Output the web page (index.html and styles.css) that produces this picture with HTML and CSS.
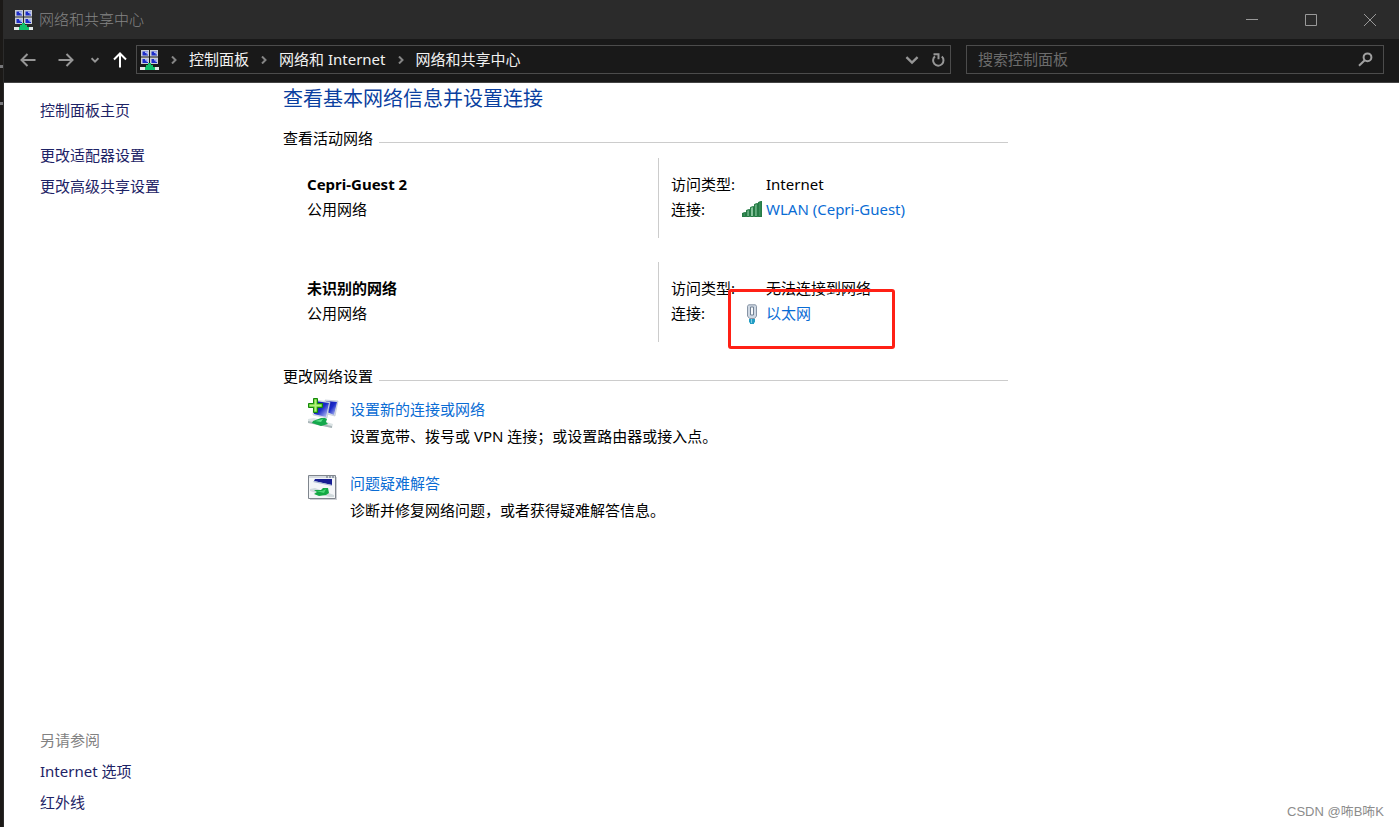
FILE: index.html
```html
<!DOCTYPE html>
<html lang="zh-CN">
<head>
<meta charset="utf-8">
<title>网络和共享中心</title>
<link rel="stylesheet" href="styles.css">
</head>
<body>
<svg class="defs" aria-hidden="true">
  <defs>
    <linearGradient id="screen" x1="0" y1="0" x2="1" y2="1">
      <stop offset="0" stop-color="#0a12a8"/><stop offset=".5" stop-color="#1c2cc8"/><stop offset="1" stop-color="#d4defc"/>
    </linearGradient>
    <linearGradient id="leaf" x1="0" y1="0" x2="1" y2="0">
      <stop offset="0" stop-color="#1f7a42"/><stop offset=".5" stop-color="#8cc8a0"/><stop offset="1" stop-color="#1f7a42"/>
    </linearGradient>
    <symbol id="network" viewBox="0 0 19 20">
      <path fill="#c9cdd6" d="M1 0h8v6.500H1zM10 0h8v6.500h-8zM1 7.500h8V14H1zM10 7.500h8V14h-8z"/>
      <path fill="#1c2cc8" d="M2.500 1.500H8v4H2.500zM11.500 1.500H17v4h-5.500zM2.500 9H8v4H2.500zM11.500 9H17v4h-5.500z"/>
      <path fill="#a9b6f0" d="M5 1.500h3v3H6.500V3H5zM14 1.500h3v3h-1.500V3H14zM5 9h3v3H6.500v-1.500H5zM14 9h3v3h-1.500v-1.500H14z"/>
      <path fill="#e2e8e8" d="M0 17h19v3H0z"/>
      <path fill="#0fc06c" d="M8 13h3v2h2v2h2v3H5v-3h1v-2h2z"/>
    </symbol>
  </defs>
</svg>
<div class="desktop-edge"><i></i><i></i></div>
<div class="window">
  <header class="titlebar">
    <svg class="app-icon"><use href="#network"/></svg>
    <span class="window-title">网络和共享中心</span>
    <button class="window-button" aria-label="最小化"><svg viewBox="0 0 12 12"><path d="M0 5.500h12"/></svg></button>
    <button class="window-button" aria-label="最大化"><svg viewBox="0 0 12 12"><path d="M.5.5h11v11H.5z"/></svg></button>
    <button class="window-button" aria-label="关闭"><svg viewBox="0 0 12 12"><path d="M0 0l12 12M12 0L0 12"/></svg></button>
  </header>
  <div class="toolbar">
    <div class="nav-buttons">
      <button class="nav-button" aria-label="后退"><svg viewBox="0 0 16 16"><path d="M15.500 8H1.500M7.500 2L1.500 8l6 6"/></svg></button>
      <button class="nav-button" aria-label="前进"><svg viewBox="0 0 16 16"><path d="M.5 8h14M8.500 2l6 6-6 6"/></svg></button>
      <button class="nav-button small" aria-label="最近的位置"><svg viewBox="0 0 8 8"><path d="M.5 2.200L4 5.700l3.500-3.500"/></svg></button>
      <button class="nav-button up" aria-label="向上"><svg viewBox="0 0 16 16"><path d="M8 15.500V1.500M2 7.500l6-6 6 6"/></svg></button>
    </div>
    <nav class="address" aria-label="地址">
      <svg class="app-icon"><use href="#network"/></svg>
      <svg class="separator" viewBox="0 0 8 8"><path d="M2 .5L5.500 4 2 7.500"/></svg>
      <a class="crumb" href="#">控制面板</a>
      <svg class="separator" viewBox="0 0 8 8"><path d="M2 .5L5.500 4 2 7.500"/></svg>
      <a class="crumb" href="#">网络和 Internet</a>
      <svg class="separator" viewBox="0 0 8 8"><path d="M2 .5L5.500 4 2 7.500"/></svg>
      <a class="crumb" href="#">网络和共享中心</a>
      <span class="address-tools">
        <button class="nav-button" aria-label="历史记录"><svg viewBox="0 0 12 12"><path d="M1.200 3.500L6 8.300l4.800-4.800"/></svg></button>
        <button class="nav-button" aria-label="刷新"><svg viewBox="0 0 14 14"><path d="M10.800 3.600A5.200 5.200 0 1 1 4 3.400M2.500 1.300h5v5"/></svg></button>
      </span>
    </nav>
    <div class="search">
      <input class="search-input" type="text" placeholder="搜索控制面板" aria-label="搜索控制面板">
      <svg class="search-icon" viewBox="0 0 15 15"><circle cx="9.500" cy="5.300" r="3.900"/><path d="M6.700 8.200L1 13.800"/></svg>
    </div>
  </div>
  <div class="content">
    <aside class="sidebar">
      <a class="side-link home" href="#">控制面板主页</a>
      <a class="side-link" href="#">更改适配器设置</a>
      <a class="side-link" href="#">更改高级共享设置</a>
      <div class="see-also">
        <span class="side-label">另请参阅</span>
        <a class="side-link" href="#">Internet 选项</a>
        <a class="side-link" href="#">红外线</a>
      </div>
    </aside>
    <main class="main">
      <h1 class="page-title">查看基本网络信息并设置连接</h1>
      <h2 class="section-title">查看活动网络</h2>
      <section class="network">
        <div class="identity"><h3 class="network-name">Cepri-Guest 2</h3><p>公用网络</p></div>
        <dl class="facts">
          <dt>访问类型:</dt><dd>Internet</dd>
          <dt>连接:</dt>
          <dd>
            <svg class="connection-icon" viewBox="0 0 20 20"><path fill="url(#leaf)" d="M0 13l4-1v5H0zM4 10l4-1v8H4zM8 7l4-1v11H8zM12 4l4-1v14h-4zM16 2l4-1v16h-4z"/><path fill="none" stroke="#267b45" d="M.5 16.500v-3l3-1v4zM4.500 16.500v-6l3-1v7zM8.500 16.500v-9l3-1v10zM12.500 16.500v-12l3-1v13zM16.500 16.500v-14l3-1v15z"/></svg>
            <a class="link" href="#">WLAN (Cepri-Guest)</a>
          </dd>
        </dl>
      </section>
      <section class="network">
        <div class="identity"><h3 class="network-name">未识别的网络</h3><p>公用网络</p></div>
        <dl class="facts">
          <dt>访问类型:</dt><dd>无法连接到网络</dd>
          <dt>连接:</dt>
          <dd class="marked">
            <svg class="connection-icon" viewBox="0 0 20 20"><path fill="#cfd8e3" stroke="#8794a5" d="M6.500.8h7l1 1.500V12l-2 2.500h-5l-2-2.500V2.300z"/><path fill="#f8fafc" stroke="#718093" d="M8.500 3h3v8h-3z"/><path fill="#239dc4" d="M7 15h6v3.500h-1V20H8v-1.500H7z"/><path stroke="#81d0e7" d="M9.500 15v4"/></svg>
            <a class="link" href="#">以太网</a>
          </dd>
        </dl>
      </section>
      <h2 class="section-title">更改网络设置</h2>
      <section class="task">
        <svg class="task-icon" viewBox="0 0 32 32">
          <path fill="#d9dfe8" stroke="#b5bfcc" stroke-width=".6" d="M18 3l13 1-3 15-8-2z"/><path fill="url(#screen)" d="M19 4l11 1-3 13-7-3z"/>
          <path fill="#dbe2ee" stroke="#b8c2d1" stroke-width=".6" d="M7 3l16 2-3 16-14-3z"/><path fill="url(#screen)" d="M8 4l14 2-3 14-12-3z"/>
          <path fill="#dce4e5" d="M1 22l6-1 19 6-1 4L1 25z"/><path fill="#aab6b9" d="M1 24l24 5v2L1 26z"/>
          <path fill="#14a84c" d="M6 24l8-3 4 0 2 1-1 3 2 2-7 2-9-3z"/><path fill="#5fe08a" d="M8 24l8-2-2 3z"/>
          <path fill="#43c51e" stroke="#17860d" d="M6.500 1.500h4v5h5v4h-5v5h-4v-5h-5v-4h5z"/><path fill="#b5f07c" d="M7.500 2.500h2v5h5v2h-5v5h-2v-5h-5v-2h5z"/>
        </svg>
        <div><a class="link" href="#">设置新的连接或网络</a><p>设置宽带、拨号或 VPN 连接；或设置路由器或接入点。</p></div>
      </section>
      <section class="task">
        <svg class="task-icon" viewBox="0 0 32 32">
          <path fill="#cdd0d4" d="M3 6h27v23H3z"/><path fill="#f4f6f8" stroke="#7f858d" d="M1.500 4.500h27v23h-27z"/>
          <path fill="#d6dbe1" d="M2 5h26v2H2z"/><path stroke="#596575" stroke-dasharray="2 1" d="M19 6h8"/>
          <path fill="#171e93" d="M8 8h17v6L7 10z"/><path fill="#aab9d3" d="M7 10l18 4v1L6 11z"/>
          <path fill="#d0d9dc" d="M3 18l5-1 19 7v2h-5L3 20z"/>
          <path fill="#13a944" d="M7 19l7 0 2-2h5l1 5-3 2-7 1-5-2 3-2z"/><path fill="#48d775" d="M9 20l6 0 4-2-2 4z"/>
        </svg>
        <div><a class="link" href="#">问题疑难解答</a><p>诊断并修复网络问题，或者获得疑难解答信息。</p></div>
      </section>
    </main>
  </div>
  <span class="watermark">CSDN @咘B咘K</span>
</div>
</body>
</html>
```
FILE: styles.css
```css
*, *::before, *::after { box-sizing: border-box; }
body {
  margin: 0;
  min-height: 100vh;
  display: flex;
  background: #fff;
  color: #000;
  font: 15px/25px "Noto Sans", "Noto Sans CJK SC", sans-serif;
}
h1, h2, h3, p, dl, dd { margin: 0; font-weight: 400; font-size: 15px; }
a { text-decoration: none; }
button { padding: 0; border: 0; background: none; color: inherit; }
svg { flex: none; }
.defs { position: absolute; width: 0; height: 0; }

.desktop-edge {
  width: 4px;
  padding-top: 65px;
  display: flex;
  flex-direction: column;
  gap: 34px;
  background: #1b1917;
  border-right: 1px solid #2b2b2b;
}
.desktop-edge i { height: 3px; background: #77777a; }
.window {
  position: relative;
  flex: 1;
  min-width: 0;
  display: flex;
  flex-direction: column;
}

.titlebar {
  height: 39px;
  display: flex;
  align-items: center;
  padding-left: 10px;
  background: #2b2b2b;
  color: #858585;
}
.app-icon { width: 19px; height: 20px; }
.window-title { flex: 1; margin-left: 6px; font-weight: 300; }
.window-button { width: 59px; height: 39px; display: grid; place-items: center; color: #999; }
.window-button svg { width: 12px; height: 12px; fill: none; stroke: currentColor; }

.toolbar {
  height: 44px;
  display: flex;
  align-items: center;
  padding: 0 15px 2px 16px;
  background: #191919;
  border-bottom: 1px solid #444;
}
.nav-buttons { width: 116px; display: flex; align-items: center; gap: 22px; }
.nav-button { display: grid; place-items: center; color: #969696; }
.nav-button svg { width: 16px; height: 16px; fill: none; stroke: currentColor; stroke-width: 2; }
.nav-button.small svg { width: 8px; height: 8px; }
.nav-button.small { margin-left: -5px; }
.nav-button.up { margin-left: -9px; color: #fff; }
.address {
  flex: 810;
  height: 29px;
  display: flex;
  align-items: center;
  padding-left: 3px;
  border: 1px solid #4c4c4c;
  color: #f2f2f2;
}
.separator { width: 8px; height: 8px; margin: 0 11px; fill: none; stroke: #858585; stroke-width: 2; }
.crumb { color: inherit; }
.address-tools { margin-left: auto; padding-right: 5px; display: flex; gap: 12px; }
.address-tools svg { width: 14px; height: 14px; }
.search {
  flex: 395;
  height: 29px;
  margin-left: 15px;
  display: flex;
  align-items: center;
  padding: 0 10px 0 11px;
  border: 1px solid #4c4c4c;
}
.search-input {
  flex: 1;
  min-width: 0;
  padding: 0;
  border: 0;
  outline: 0;
  background: none;
  color: #ddd;
  font: inherit;
}
.search-input::placeholder { color: #6c6c6c; opacity: 1; }
.search-icon { width: 15px; height: 15px; fill: none; stroke: #a0a0a0; stroke-width: 2; }

.content { flex: 1; display: flex; }
.sidebar {
  width: 279px;
  display: flex;
  flex-direction: column;
  gap: 6px;
  padding: 15px 20px 12px 36px;
}
.side-link { color: #1d2366; }
.side-link.home { margin-bottom: 14px; }
.side-label { color: #828282; }
.see-also { margin-top: auto; display: flex; flex-direction: column; gap: 6px; }

.main { flex: 1; max-width: 725px; }
.page-title { margin-bottom: 11px; font-size: 20px; line-height: 32px; color: #0a3fa0; }
.section-title { display: flex; align-items: center; gap: 6px; }
.section-title::after { content: ""; flex: 1; height: 1px; margin-top: 7px; background: #ccc; }
.network { display: grid; grid-template-columns: 375px 1fr; margin: 7px 0 24px; }
.network + .network { margin-bottom: 22px; }
.identity, .facts { padding: 14px 0 16px; }
.identity { padding-left: 24px; }
.network-name { font-weight: 700; }
.facts {
  display: grid;
  grid-template-columns: 70px 1fr;
  padding-left: 12px;
  border-left: 1px solid #ccc;
}
.facts dd { display: flex; align-items: center; padding-left: 25px; }
.facts dd:has(.connection-icon) { padding-left: 1px; }
.connection-icon { width: 20px; height: 20px; margin-right: 4px; }
.link { color: #0a6cd4; }
.marked { position: relative; }
.marked::after {
  content: "";
  position: absolute;
  left: -13px;
  top: -12px;
  width: 167px;
  height: 60px;
  border: 3px solid #ff2015;
  border-radius: 3px;
}
.task { display: flex; gap: 11px; padding: 8px 0 14px 24px; }
.task-icon { width: 32px; height: 32px; }
.task p { margin-top: 2px; }
.watermark { position: absolute; right: 15px; bottom: 3px; font-family: "Liberation Sans", "Noto Sans CJK SC", sans-serif; font-size: 13px; color: #8c8c8c; }
```
